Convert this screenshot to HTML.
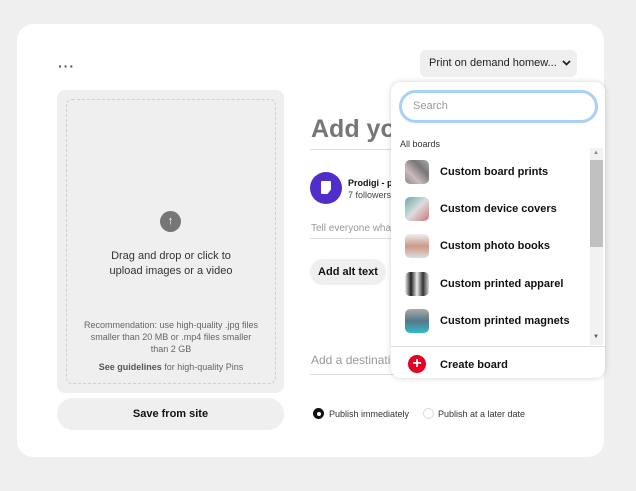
<!DOCTYPE html><html><head><style>
*{box-sizing:border-box;margin:0;padding:0}
body{width:636px;height:491px;background:#efefef;font-family:"Liberation Sans",sans-serif;position:relative;overflow:hidden;color:#111}
.a{position:absolute}
.card{left:17px;top:24px;width:587px;height:433px;background:#fff;border-radius:16px}
.up{left:57px;top:90px;width:227px;height:303px;background:#efefef;border-radius:8px}
.dash{left:66px;top:99px;width:210px;height:285px;border:1px dashed #cfcfcf;border-radius:6px}
.c{text-align:center;color:#333}
.btn{background:#efefef;border-radius:16px;font-weight:bold;font-size:11px;text-align:center}
.dd{left:391px;top:82px;width:214px;height:296px;background:#fff;border-radius:10px;box-shadow:0 0 6px rgba(0,0,0,.18);overflow:hidden}
.it{left:14px;width:24px;height:24px;border-radius:5px}
.lb{left:49px;font-size:11px;font-weight:bold;color:#111}
</style></head><body>
<div class="a card"></div>
<div class="a" style="left:58px;top:58px;font-size:14px;color:#555;letter-spacing:1px;font-weight:bold">···</div>
<div class="a up"></div><div class="a dash"></div>
<div class="a" style="left:160px;top:211px;width:21px;height:21px;border-radius:50%;background:#767676;color:#fff;font-size:11px;text-align:center;line-height:21px;font-weight:bold">↑</div>
<div class="a c" style="left:66px;top:249px;width:210px;font-size:11px;line-height:15px">Drag and drop or click to<br>upload images or a video</div>
<div class="a c" style="left:76px;top:319px;width:190px;font-size:9px;line-height:12px;color:#666">Recommendation: use high-quality .jpg files<br>smaller than 20 MB or .mp4 files smaller<br>than 2 GB</div>
<div class="a c" style="left:66px;top:362px;width:210px;font-size:9px;color:#666"><b style="color:#555">See guidelines</b> for high-quality Pins</div>
<div class="a btn" style="left:57px;top:398px;width:227px;height:32px;line-height:32px">Save from site</div>
<div class="a" style="left:420px;top:50px;width:157px;height:27px;background:#efefef;border-radius:6px;font-size:11px;line-height:27px;padding-left:9px;color:#222">Print on demand homew...<svg class="a" style="right:6px;top:10px" width="9" height="6" viewBox="0 0 9 6"><path d="M1 1l3.5 3.5L8 1" stroke="#222" stroke-width="1.8" fill="none"/></svg></div>
<div class="a" style="left:311px;top:115px;font-size:25px;font-weight:bold;color:#767676">Add yo</div>
<div class="a" style="left:310px;top:149px;width:90px;height:1px;background:#ddd"></div>
<div class="a" style="left:310px;top:172px;width:32px;height:32px;border-radius:50%;background:#4f2ecb"><div class="a" style="left:11px;top:9px;width:10px;height:13px;background:#fff;border-radius:1px;clip-path:polygon(0 0,100% 0,100% 65%,65% 100%,0 100%)"></div></div>
<div class="a" style="left:348px;top:178px;font-size:9px;font-weight:bold">Prodigi - p</div>
<div class="a" style="left:348px;top:190px;font-size:9px;color:#444">7 followers</div>
<div class="a" style="left:311px;top:223px;font-size:10px;color:#999">Tell everyone wha</div>
<div class="a" style="left:310px;top:238px;width:90px;height:1px;background:#ddd"></div>
<div class="a btn" style="left:310px;top:259px;width:76px;height:26px;line-height:26px">Add alt text</div>
<div class="a" style="left:311px;top:353px;font-size:12px;color:#999">Add a destinati</div>
<div class="a" style="left:310px;top:374px;width:90px;height:1px;background:#ddd"></div>
<div class="a" style="left:313px;top:408px;width:11px;height:11px;border-radius:50%;background:#111"><div class="a" style="left:3.5px;top:3.5px;width:4px;height:4px;background:#fff;border-radius:50%"></div></div>
<div class="a" style="left:329px;top:409px;font-size:9px;color:#333">Publish immediately</div>
<div class="a" style="left:423px;top:408px;width:11px;height:11px;border-radius:50%;border:1px solid #ddd"></div>
<div class="a" style="left:438px;top:409px;font-size:9px;color:#333">Publish at a later date</div>
<div class="a dd">
<div class="a" style="left:8px;top:8px;width:199px;height:33px;border:3px solid #a9d0f7;border-radius:17px;font-size:11px;color:#999;line-height:27px;padding-left:11px">Search</div>
<div class="a" style="left:9px;top:57px;font-size:9px;color:#333">All boards</div>
<div class="a" style="left:199px;top:66px;width:13px;height:197px;background:#f2f2f2"></div>
<div class="a" style="left:199px;top:78px;width:13px;height:87px;background:#c1c1c1"></div>
<div class="a" style="left:202px;top:68px;font-size:6px;color:#888">▲</div>
<div class="a" style="left:202px;top:252px;font-size:6px;color:#555">▼</div>
<div class="a it" style="top:78px;background:linear-gradient(45deg,#888,#cbb,#777,#aaa)"></div><div class="a lb" style="top:84px">Custom board prints</div>
<div class="a it" style="top:115px;background:linear-gradient(135deg,#6aa,#ddd,#c77)"></div><div class="a lb" style="top:121px">Custom device covers</div>
<div class="a it" style="top:152px;background:linear-gradient(#eee,#c98,#ddd)"></div><div class="a lb" style="top:158px">Custom photo books</div>
<div class="a it" style="top:190px;background:linear-gradient(90deg,#eee,#222,#eee,#333,#ddd)"></div><div class="a lb" style="top:196px">Custom printed apparel</div>
<div class="a it" style="top:227px;background:linear-gradient(#aaa,#578,#3bc)"></div><div class="a lb" style="top:233px">Custom printed magnets</div>
<div class="a" style="left:0;top:264px;width:214px;height:1px;background:#ddd"></div>
<div class="a" style="left:17px;top:273px;width:18px;height:18px;border-radius:50%;background:#e60023;color:#fff;font-weight:bold;text-align:center;line-height:18px;font-size:16px">+</div>
<div class="a lb" style="top:277px">Create board</div>
</div>
</body></html>
